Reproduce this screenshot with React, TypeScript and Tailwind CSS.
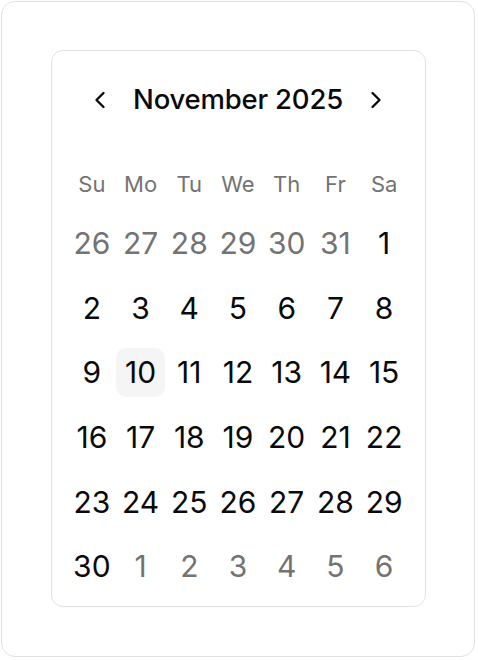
import React from 'react';
import { ChevronLeft, ChevronRight } from 'lucide-react';

type Day = { n: number; muted?: boolean };

const WEEKDAYS = ['Su', 'Mo', 'Tu', 'We', 'Th', 'Fr', 'Sa'];

// November 2025 starts on a Saturday, so the first row borrows October's tail
function buildWeeks(): Day[][] {
  const days: Day[] = [];
  for (let d = 26; d <= 31; d++) days.push({ n: d, muted: true });
  for (let d = 1; d <= 30; d++) days.push({ n: d });
  for (let d = 1; days.length < 42; d++) days.push({ n: d, muted: true });
  const weeks: Day[][] = [];
  for (let i = 0; i < days.length; i += 7) weeks.push(days.slice(i, i + 7));
  return weeks;
}

export default function App() {
  const weeks = buildWeeks();
  const selected = 10;

  return (
    <div className="w-[478px] h-[660px] bg-white p-px" style={{ fontFamily: 'Inter, "Noto Sans", sans-serif' }}>
      <div className="h-[656px] w-[474px] rounded-[14px] border border-[#e2e2e2] bg-white flex justify-center pt-[48px]">
        <div className="w-[375px] h-[557px] rounded-xl border border-[#e2e2e2] bg-white px-4 pb-4 pt-[25px]">
          {/* month caption */}
          <div className="h-12 flex items-center justify-center gap-[19px] text-[#0a0a0a]">
            <button className="flex items-center justify-center" aria-label="Previous month">
              <ChevronLeft size={28} strokeWidth={2} />
            </button>
            <span className="text-[27.5px] font-medium tracking-[-0.2px]">November 2025</span>
            <button className="flex items-center justify-center" aria-label="Next month">
              <ChevronRight size={28} strokeWidth={2} />
            </button>
          </div>

          {/* weekday labels */}
          <div className="mt-[44px] grid grid-cols-7 h-6">
            {WEEKDAYS.map((w) => (
              <div key={w} className="flex items-center justify-center text-[22px] text-[#737373]">
                {w}
              </div>
            ))}
          </div>

          {/* day grid */}
          <div className="mt-[27px] flex flex-col gap-4">
            {weeks.map((week, wi) => (
              <div key={wi} className="grid grid-cols-7">
                {week.map((day, di) => {
                  const isSel = !day.muted && day.n === selected;
                  return (
                    <div
                      key={di}
                      className={
                        'aspect-square flex items-center justify-center rounded-[10px] text-[30px] ' +
                        (day.muted ? 'text-[#737373] ' : 'text-[#0a0a0a] ') +
                        (isSel ? 'bg-[#f5f5f5]' : '')
                      }
                    >
                      {day.n}
                    </div>
                  );
                })}
              </div>
            ))}
          </div>
        </div>
      </div>
    </div>
  );
}
